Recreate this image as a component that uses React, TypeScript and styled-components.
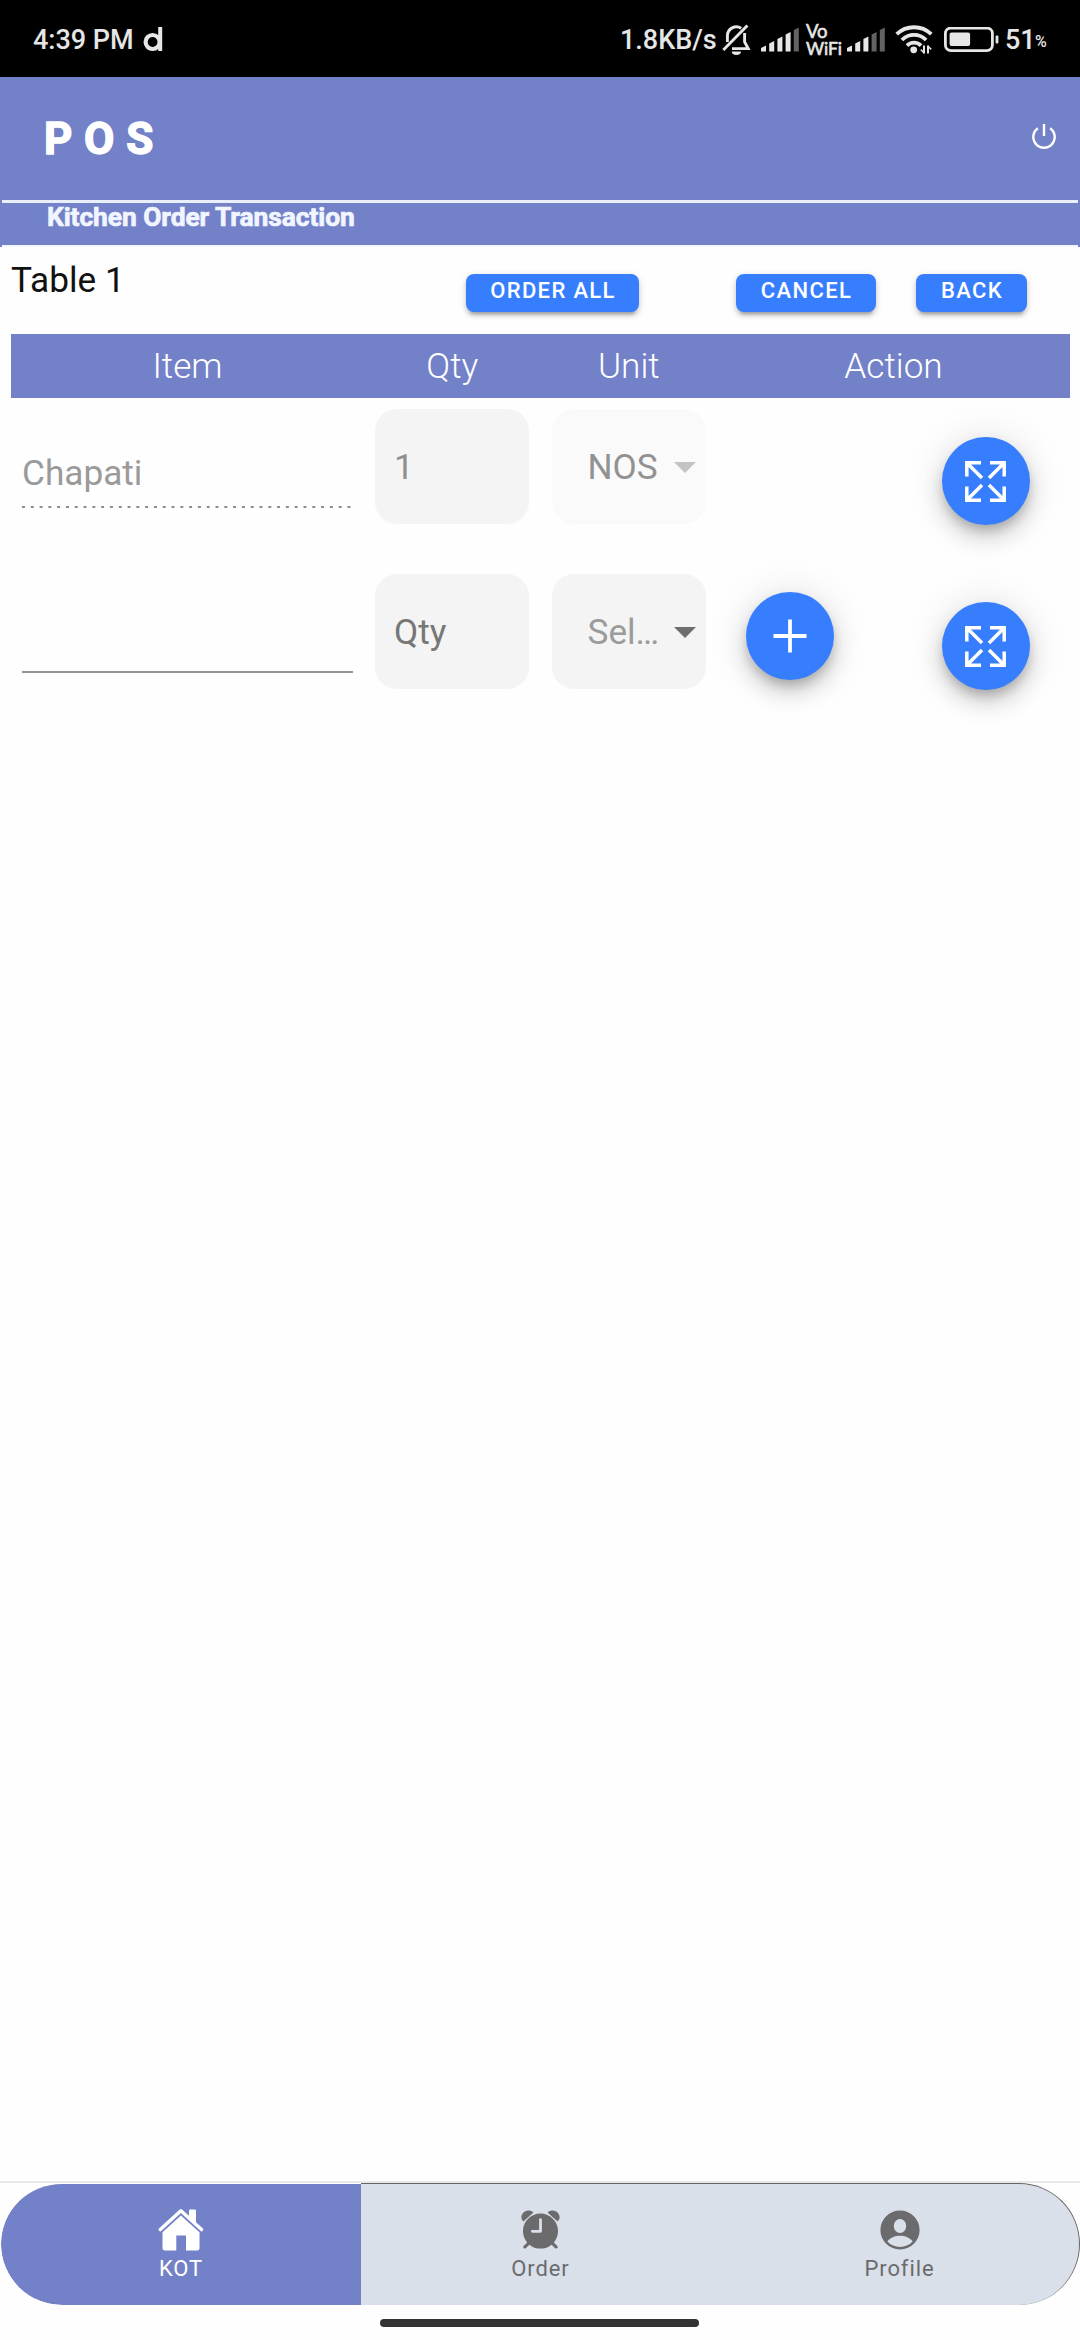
import React from "react";
import styled, { createGlobalStyle } from "styled-components";
import { IoIosAlarm } from "react-icons/io";

const purple = "#7381c8";
const blue = "#377eff";
const pale = "#e6e6e6";

const GlobalStyle = createGlobalStyle`
  *, *::before, *::after { box-sizing: border-box; }
  body {
    margin: 0;
    background: #fff;
    font-family: Roboto, "Noto Sans", sans-serif;
  }
  svg { display: block; flex: none; }
`;

const Screen = styled.div`
  width: 1080px;
  height: 2340px;
  display: flex;
  flex-direction: column;
  background: #fefefe;
  overflow: hidden;
`;

const StatusBar = styled.div`
  height: 77px;
  padding: 2px 31px 0 33px;
  display: flex;
  align-items: center;
  justify-content: space-between;
  background: #000;
  color: ${pale};
  font-size: 27px;
  font-weight: 500;
  line-height: 32px;
  white-space: nowrap;
`;

const StatusGroup = styled.div`
  display: flex;
  align-items: center;
`;

const Spacer = styled.span<{ $w: number }>`
  width: ${(p) => p.$w}px;
  flex: none;
`;

const StatusText = styled.span<{ $w: number; $gap?: number }>`
  width: ${(p) => p.$w}px;
  margin-right: ${(p) => p.$gap ?? 0}px;
`;

const VoWifi = styled.span`
  width: 33px;
  display: flex;
  flex-direction: column;
  font-family: Lato, sans-serif;
  font-size: 17.5px;
  line-height: 17px;
  font-weight: 400;
  letter-spacing: -0.1px;
  -webkit-text-stroke: 0.6px ${pale};
`;

const VoLine = styled.span`
  font-size: 18.5px;
`;

const Percent = styled.span`
  width: 14px;
  font-size: 16px;
  line-height: 16px;
  padding-top: 5px;
`;

const Header = styled.header`
  height: 126px;
  padding: 0 23px 3px 44px;
  display: flex;
  align-items: center;
  justify-content: space-between;
  background: linear-gradient(#e9f0fc, #e9f0fc) 2px bottom / calc(100% - 4px) 3px
    no-repeat ${purple};
  color: #fff;
`;

const Brand = styled.h1`
  margin: 0;
  padding-top: 1px;
  font-size: 44px;
  line-height: 52px;
  font-weight: 700;
  letter-spacing: 0.4px;
  -webkit-text-stroke: 1.4px #fff;
`;

const PowerButton = styled.button`
  border: 0;
  padding: 0 0 5px;
  background: none;
  color: #fff;
`;

const SubHeader = styled.div`
  height: 44px;
  padding: 0 0 0 47px;
  background: linear-gradient(#f3f6fd, #f3f6fd) 2px bottom / calc(100% - 4px) 2px
    no-repeat ${purple};
  color: #f1f5ff;
  font-size: 26.4px;
  line-height: 28px;
  font-weight: 700;
  letter-spacing: -0.08px;
  -webkit-text-stroke: 0.7px #f1f5ff;
`;

const Toolbar = styled.div`
  height: 87px;
  padding-left: 11px;
  display: flex;
`;

const TableName = styled.div`
  width: 455px;
  padding-top: 12px;
  font-size: 35.2px;
  line-height: 42px;
  color: #111;
`;

const ActionButton = styled.button<{ $w: number; $gap: number }>`
  width: ${(p) => p.$w}px;
  height: 38px;
  margin: 27px ${(p) => p.$gap}px 0 0;
  padding: 0 0 5px 1px;
  border: 0;
  border-radius: 8px;
  background: ${blue};
  color: #fff;
  font-family: inherit;
  font-size: 22px;
  font-weight: 500;
  letter-spacing: 1.35px;
  line-height: 32px;
  white-space: nowrap;
  box-shadow: 0 6px 3px -4px rgba(0, 0, 0, 0.2), 0 4px 4px rgba(0, 0, 0, 0.14),
    0 2px 9px rgba(0, 0, 0, 0.12);
`;

const Columns = styled.div`
  margin: 0 10px 0 11px;
  display: grid;
  grid-template-columns: 353px 176.5px 176.5px 176.5px 176.5px;
`;

const TableHead = styled(Columns)`
  height: 64px;
  align-items: center;
  background: ${purple};
  color: #fff;
  font-size: 35.2px;
  font-weight: 300;
  text-align: center;
`;

const HeadCell = styled.div<{ $span?: number }>`
  grid-column: span ${(p) => p.$span ?? 1};
  line-height: 42px;
`;

const Row = styled(Columns)`
  height: 165px;
  padding-top: 11px;
  align-items: start;
`;

const ItemField = styled.div<{ $disabled?: boolean }>`
  width: 331px;
  height: 99px;
  margin-left: 11px;
  padding-top: 43px;
  font-size: 35.2px;
  line-height: 42px;
  color: #9a9a9a;
  background-repeat: repeat-x;
  background-position: 0 bottom;
  background-size: ${(p) => (p.$disabled ? "8.8px 2px" : "100% 2px")};
  background-image: ${(p) =>
    p.$disabled
      ? "linear-gradient(to right, #8c8c8c 0, #8c8c8c 34%, transparent 35%)"
      : "linear-gradient(#949494, #949494)"};
`;

const Box = styled.div<{ $faded?: boolean; $tone: string; $indent: number }>`
  width: 154px;
  height: 115px;
  margin-left: 11px;
  padding: 0 10px 0 ${(p) => p.$indent}px;
  display: flex;
  align-items: center;
  justify-content: space-between;
  border-radius: 22px;
  background: ${(p) => (p.$faded ? "#fafafa" : "#f4f4f4")};
  color: ${(p) => p.$tone};
  font-size: 35.2px;
  line-height: 42px;
  white-space: nowrap;
`;

const Caret = styled.span<{ $faded?: boolean }>`
  margin-top: 2px;
  border: 11px solid transparent;
  border-bottom-width: 0;
  border-top-color: ${(p) => (p.$faded ? "#c3c3c3" : "#6e6e6e")};
`;

const Fab = styled.button<{ $top: number; $left: number }>`
  width: 88px;
  height: 88px;
  margin: ${(p) => p.$top}px 0 0 ${(p) => p.$left}px;
  padding: 0;
  border: 0;
  border-radius: 50%;
  display: flex;
  align-items: center;
  justify-content: center;
  background: ${blue};
  color: #fff;
  box-shadow: 0 7px 11px -2px rgba(0, 0, 0, 0.2),
    0 13px 22px rgba(0, 0, 0, 0.14), 0 2px 40px rgba(0, 0, 0, 0.12);
`;

const Content = styled.main`
  flex: 1;
`;

const TabBar = styled.nav`
  height: 124px;
  display: grid;
  grid-template-columns: 361px 359px 360px;
  border-top: 2px solid #e9e9e9;
`;

const Tab = styled.div<{ $active?: boolean; $last?: boolean }>`
  display: flex;
  flex-direction: column;
  align-items: center;
  margin-left: ${(p) => (p.$active ? 1 : 0)}px;
  padding-top: 20px;
  background: ${(p) => (p.$active ? purple : "#dae0e9")};
  background-clip: padding-box;
  color: ${(p) => (p.$active ? "#fff" : "#6b6b6e")};
  border-top: 1px solid ${(p) => (p.$active ? "transparent" : "#666")};
  border-right: ${(p) => (p.$last ? "1px solid #666" : "0")};
  border-radius: ${(p) =>
    p.$active ? "61px 0 0 61px" : p.$last ? "0 61px 61px 0" : "0"};
`;

const TabIcon = styled.span`
  height: 51px;
  display: flex;
  align-items: center;
`;

const TabLabel = styled.span`
  font-size: 22px;
  line-height: 26px;
  letter-spacing: 0.9px;
  margin-top: 1px;
`;

const GestureArea = styled.div`
  height: 35px;
  padding: 14px 0 0 380px;
`;

const GestureBar = styled.div`
  width: 319px;
  height: 8px;
  border-radius: 4px;
  background: #333;
`;

const BrandMark = () => (
  <svg width="20" height="26" viewBox="0 0 20 26" fill="none" stroke={pale} strokeWidth="4.2">
    <circle cx="9.6" cy="15" r="7" />
    <path d="M17.2 0v24" strokeWidth="4" />
  </svg>
);

const MutedBell = () => (
  <svg width="29" height="32" viewBox="0 0 29 32" fill="none" stroke={pale} strokeWidth="2.9">
    <path d="M5.4 18V11.5A9 9 0 0 1 19.2 4.2M22.6 9V18l3.6 6.6H10" />
    <path d="M1.3 26 25.4 1.6" />
    <path d="M9.8 27.6a4.6 3.4 0 0 0 9.2 0Z" fill={pale} stroke="none" />
  </svg>
);

const Signal = ({ level }: { level: number }) => (
  <svg width="38" height="25" viewBox="0 0 38 25">
    {[6, 10.5, 15, 19.5, 24].map((h, i) => (
      <path
        key={h}
        d={`M${i * 8.2} 24.5v${-(h - 2.5)}l5-2.5v${h}z`}
        fill={i < level ? pale : "#626262"}
      />
    ))}
  </svg>
);

const Wifi = () => (
  <svg width="38" height="30" viewBox="0 0 38 30" fill="none" stroke={pale} strokeWidth="3.8">
    <path d="M1.7 9.2a25 25 0 0 1 34.6 0M6.9 15a17 17 0 0 1 24.2 0M12 20.6a9.8 9.8 0 0 1 14 0" />
    <circle cx="18.7" cy="24.8" r="3.4" fill={pale} stroke="none" />
    <path d="M29 20.5v8M33 28.5v-8" strokeWidth="2" />
    <path d="M29.2 28l-3.4-3.4M32.8 21l3.4 3.4" strokeWidth="1.5" />
  </svg>
);

const Battery = () => (
  <svg width="55" height="26" viewBox="0 0 55 26">
    <rect x="1.4" y="1" width="47" height="22.6" rx="5.5" fill="none" stroke={pale} strokeWidth="2.8" />
    <rect x="5.6" y="5.6" width="20.5" height="13.4" rx="2" fill={pale} />
    <rect x="51.6" y="8.4" width="2.8" height="8" rx="1" fill={pale} />
  </svg>
);

const PowerIcon = () => (
  <svg width="26" height="26" viewBox="0 0 26 26" fill="none" stroke="currentColor" strokeWidth="2.4">
    <path d="M6.9 5.2a10.7 10.7 0 1 0 12.2 0M13 1v12" />
  </svg>
);

const ExpandIcon = () => (
  <svg width="41" height="41" viewBox="0 0 41 41" fill="none" stroke="currentColor" strokeWidth="3.5">
    <path d="M16 1.8H1.8V15.5M2 2l15 15" />
    <path d="M25 1.8h14.2V15.5M39 2 24 17" />
    <path d="M16 39.2H1.8V25.5M2 39l15-15" />
    <path d="M25 39.2h14.2V25.5M39 39 24 24" />
  </svg>
);

const AddIcon = () => (
  <svg width="34" height="34" viewBox="0 0 34 34" fill="none" stroke="currentColor" strokeWidth="3.8">
    <path d="M17 .5v33M.5 17h33" />
  </svg>
);

const HomeIcon = () => (
  <svg width="46" height="43" viewBox="0 0 46 43" fill="currentColor">
    <path
      d="M2.3 21.6 22.9 2.7l20.6 18.9"
      fill="none"
      stroke="currentColor"
      strokeWidth="3.4"
      strokeLinecap="round"
      strokeLinejoin="round"
    />
    <path d="M31 2.5q0-1 1-1h5q1 0 1 1V16l-7-6z" />
    <path d="M4.5 24.2 22.9 7.6l18.6 16.6V40a2.5 2.5 0 0 1-2.5 2.5H28V27.5h-9.7v15H7A2.5 2.5 0 0 1 4.5 40z" />
  </svg>
);

const ContactIcon = () => (
  <svg width="40" height="40" viewBox="0 0 40 40" fill="currentColor" fillRule="evenodd">
    <path d="M20 .4a19.6 19.6 0 1 1 0 39.2a19.6 19.6 0 0 1 0-39.2zM20 9a6.2 7 0 1 0 0 14a6.2 7 0 0 0 0-14zM7.4 31.4A17 17 0 0 0 32.6 31.4C30 27.5 25 25.7 20 25.7S10 27.5 7.4 31.4z" />
  </svg>
);

export default function App() {
  return (
    <>
      <GlobalStyle />
      <Screen>
        <StatusBar>
          <StatusGroup>
            <StatusText $w={110}>4:39 PM</StatusText>
            <BrandMark />
          </StatusGroup>
          <StatusGroup>
            <StatusText $w={96} $gap={6}>1.8KB/s</StatusText>
            <MutedBell />
            <Spacer $w={10} />
            <Signal level={4} />
            <Spacer $w={7} />
            <VoWifi>
              <VoLine>Vo</VoLine>
              <span>WiFi</span>
            </VoWifi>
            <Spacer $w={8} />
            <Signal level={3} />
            <Spacer $w={10} />
            <Wifi />
            <Spacer $w={11} />
            <Battery />
            <Spacer $w={6} />
            <StatusText $w={30}>51</StatusText>
            <Percent>%</Percent>
          </StatusGroup>
        </StatusBar>

        <Header>
          <Brand>P O S</Brand>
          <PowerButton aria-label="Log out">
            <PowerIcon />
          </PowerButton>
        </Header>
        <SubHeader>Kitchen Order Transaction</SubHeader>

        <Content>
          <Toolbar>
            <TableName>Table 1</TableName>
            <ActionButton $w={173} $gap={97}>ORDER ALL</ActionButton>
            <ActionButton $w={140} $gap={40}>CANCEL</ActionButton>
            <ActionButton $w={111} $gap={0}>BACK</ActionButton>
          </Toolbar>

          <TableHead>
            <HeadCell>Item</HeadCell>
            <HeadCell>Qty</HeadCell>
            <HeadCell>Unit</HeadCell>
            <HeadCell $span={2}>Action</HeadCell>
          </TableHead>

          <Row>
            <ItemField $disabled>Chapati</ItemField>
            <Box $tone="#8f8f8f" $indent={19}>1</Box>
            <Box $tone="#929292" $indent={36} $faded>
              NOS
              <Caret $faded />
            </Box>
            <span />
            <Fab $top={28} $left={48} aria-label="Expand">
              <ExpandIcon />
            </Fab>
          </Row>
          <Row>
            <ItemField />
            <Box $tone="#777" $indent={19}>Qty</Box>
            <Box $tone="#9b9b9b" $indent={36}>
              Sel…
              <Caret />
            </Box>
            <Fab $top={18} $left={29} aria-label="Add">
              <AddIcon />
            </Fab>
            <Fab $top={28} $left={48} aria-label="Expand">
              <ExpandIcon />
            </Fab>
          </Row>
        </Content>

        <TabBar>
          <Tab $active>
            <TabIcon>
              <HomeIcon />
            </TabIcon>
            <TabLabel>KOT</TabLabel>
          </Tab>
          <Tab>
            <TabIcon>
              <IoIosAlarm size={51} />
            </TabIcon>
            <TabLabel>Order</TabLabel>
          </Tab>
          <Tab $last>
            <TabIcon>
              <ContactIcon />
            </TabIcon>
            <TabLabel>Profile</TabLabel>
          </Tab>
        </TabBar>
        <GestureArea>
          <GestureBar />
        </GestureArea>
      </Screen>
    </>
  );
}
